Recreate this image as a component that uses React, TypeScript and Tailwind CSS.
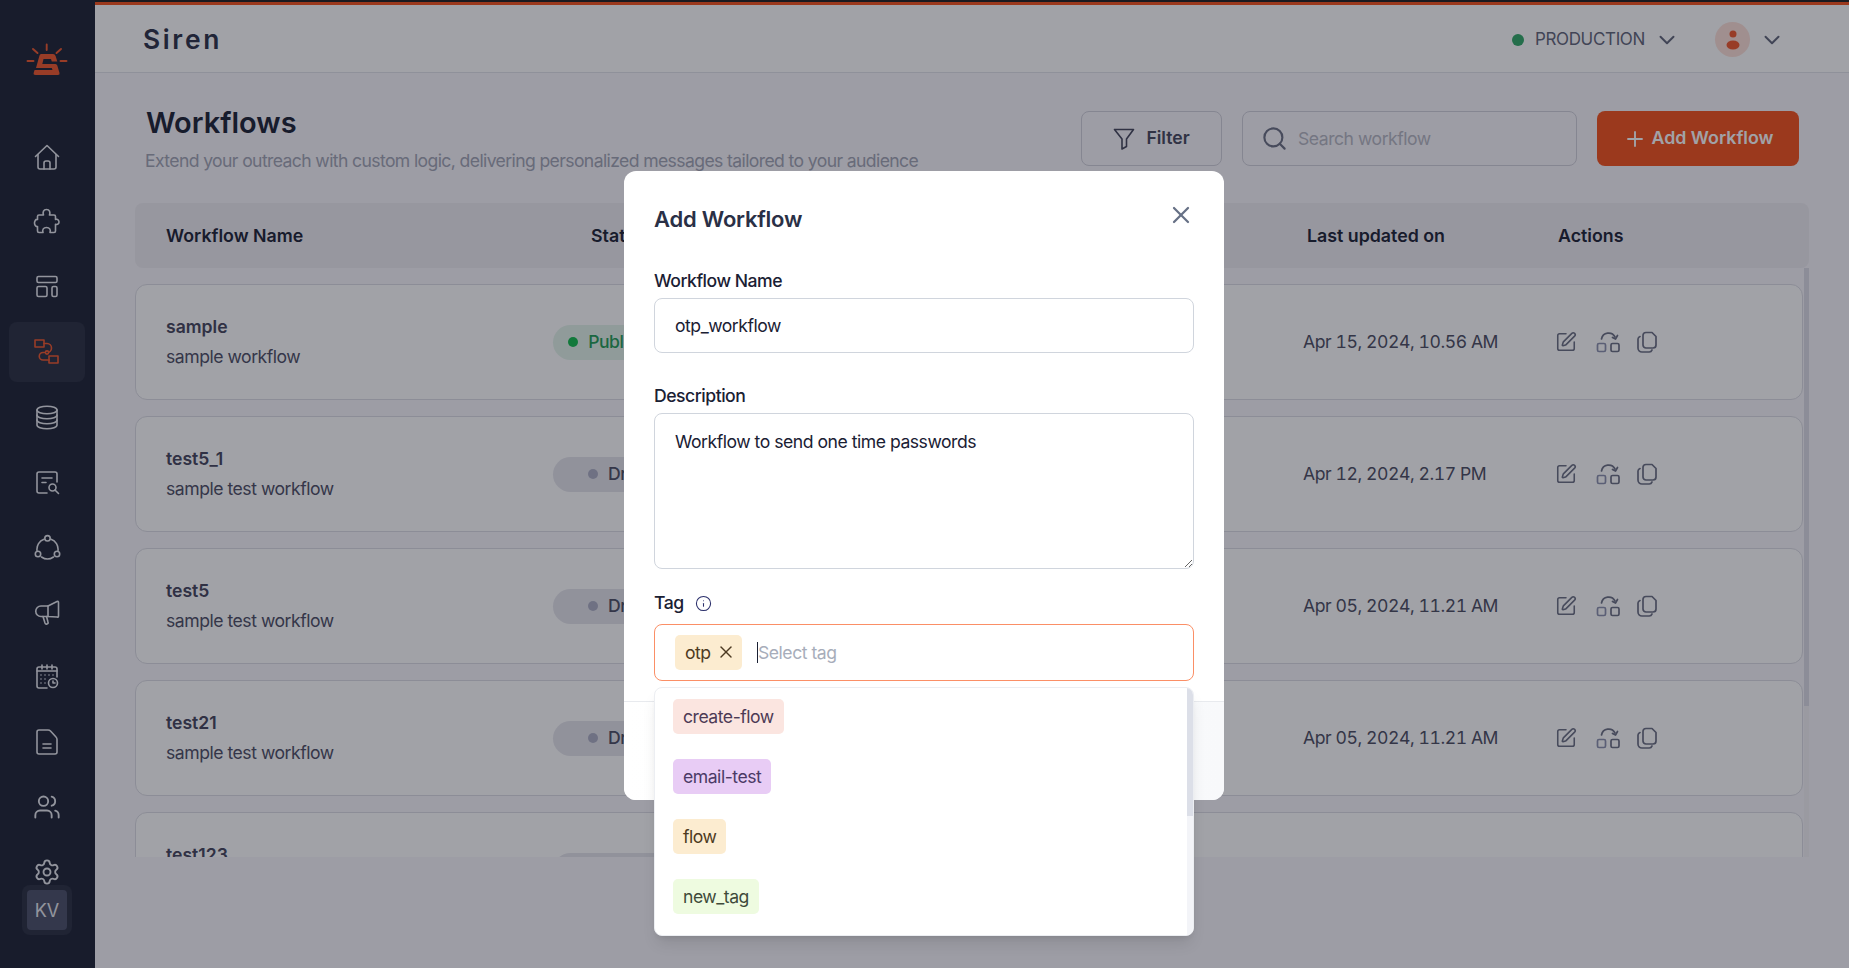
import React from 'react';
import { ChevronDown, Info, Plus, Search, Settings, SquarePen, Users, X } from 'lucide-react';

const Ico = ({ children, className = '' }: { children: React.ReactNode; className?: string }) => (
  <svg width="28" height="28" viewBox="0 0 28 28" fill="none" stroke="currentColor" strokeWidth="1.6" strokeLinecap="round" strokeLinejoin="round" className={className}>
    {children}
  </svg>
);

const Logo = () => (
  <svg width="54" height="50" viewBox="0 0 54 50" fill="none">
    <g stroke="#f0562a" strokeWidth="1.9" strokeLinecap="round">
      <path d="M26.7 7.5V13M13 12l4.5 4M41 12l-4.500 4M7.500 24H13.500M40.500 24H46.500" />
    </g>
    <path
      d="M21 17H33Q35 17 35.600 19L37.300 24.500H31.800L31 22H23.500L22.300 27H35.500Q36.800 27 37.300 28.500L39.500 36Q40 38 38 38H15.500Q13 38 13.800 35.500L14.600 33H32.500L31.800 31H16L19.500 18.500Q20 17 21 17Z"
      fill="#f0562a"
    />
  </svg>
);

const HomeIcon = () => (
  <Ico>
    <path d="M2.500 13.500L14 2.500l11.500 11" />
    <path d="M5 11.500V24a2 2 0 0 0 2 2h14a2 2 0 0 0 2-2V11.500" />
    <path d="M11 26v-6a2 2 0 0 1 2-2h2a2 2 0 0 1 2 2v6" />
  </Ico>
);

const PuzzleIcon = () => (
  <Ico>
    <path d="M6 7H10.500C9.500 4 10.500 1.500 13.500 1.500C16.500 1.500 17.500 4 16.500 7H21A1.500 1.500 0 0 1 22.500 8.500V11.500C25 10.500 26 13 26 14C26 15.500 25 17 22.500 16.300V23A1.500 1.500 0 0 1 21 24.500H17C18 21.500 16.500 19.500 13.500 19.500C10.500 19.500 9 21.500 10 24.500H6A1.500 1.500 0 0 1 4.500 23V18.500C2.500 19 1.500 16.500 1.500 15C1.500 13.500 2.500 11 4.500 11.500V8.500A1.500 1.500 0 0 1 6 7Z" />
  </Ico>
);

const LayoutIcon = () => (
  <Ico>
    <rect x="4" y="3.500" width="20" height="6" rx="1.500" />
    <rect x="4" y="13.500" width="10" height="10" rx="1.500" />
    <rect x="19" y="13.500" width="5" height="10" rx="1.500" />
  </Ico>
);

const FlowIcon = () => (
  <Ico>
    <rect x="2" y="2" width="9" height="7" />
    <rect x="16" y="18" width="9" height="7" />
    <path d="M11 5.500h3a4.500 4.500 0 0 1 0 9h-4a3.700 3.700 0 0 0 0 7.500h6" />
    <circle cx="14" cy="14.500" r="1.600" fill="#282d40" />
  </Ico>
);

const DatabaseIcon = () => (
  <Ico>
    <ellipse cx="14" cy="7" rx="10" ry="3.800" />
    <path d="M4 7V22c0 2.100 4.500 3.800 10 3.800s10-1.700 10-3.800V7" />
    <path d="M4 12c0 2.100 4.500 3.800 10 3.800s10-1.700 10-3.800" />
    <path d="M4 17c0 2.100 4.500 3.800 10 3.800s10-1.700 10-3.800" />
  </Ico>
);

const ReportIcon = () => (
  <Ico>
    <path d="M14 25H6a2 2 0 0 1-2-2V6a2 2 0 0 1 2-2h16a2 2 0 0 1 2 2v8" />
    <path d="M9 10h10M9 14.500h4" />
    <circle cx="19.500" cy="19.500" r="3.500" />
    <path d="M22 22l3.500 3.500" />
  </Ico>
);

const NetworkIcon = () => (
  <Ico>
    <circle cx="14.500" cy="4.300" r="2.700" />
    <circle cx="5" cy="20" r="2.700" />
    <circle cx="24" cy="20" r="2.700" />
    <path d="M11 5.200A10.700 10.700 0 0 0 4 16.500M18 5.200A10.700 10.700 0 0 1 25 16.500M8.500 23A10.700 10.700 0 0 0 20.500 23" />
  </Ico>
);

const MegaphoneIcon = () => (
  <Ico>
    <path d="M15 8L24 3.500Q25.500 3 25.500 4.500V18Q25.500 19.500 24 19L15 18.500Z" />
    <path d="M15 8H8a5.200 5.200 0 0 0 0 10.500H15" />
    <path d="M10 18.500L12 25Q12.500 26.500 14 26 15.500 25.500 15 24L13.500 18.500" />
  </Ico>
);

const CalendarIcon = () => (
  <Ico>
    <path d="M14 25H6a2 2 0 0 1-2-2V6a2 2 0 0 1 2-2h16a2 2 0 0 1 2 2v8" />
    <path d="M9 2v4M14 2v4M19 2v4M4 8h20" />
    <path d="M8 12h.01M12 12h.01M16 12h.01M20 12h.01M8 16h.01M12 16h.01M8 20h.01M12 20h.01" />
    <circle cx="20" cy="20" r="4.500" />
    <path d="M20 18v2h2" />
  </Ico>
);

const DocIcon = () => (
  <Ico>
    <path d="M6 2h9q1.500 0 2.500 1l5.500 6q1 1 1 2.500V24a2 2 0 0 1-2 2H6a2 2 0 0 1-2-2V4a2 2 0 0 1 2-2z" />
    <path d="M10 16h8M10 20h8" />
  </Ico>
);

const ReorderIcon = () => (
  <svg width="26" height="26" viewBox="0 0 26 26" fill="none" stroke="currentColor" strokeWidth="1.700" strokeLinecap="round" strokeLinejoin="round">
    <rect x="2.500" y="16.500" width="8" height="8" rx="1.500" stroke="#8a90ad" />
    <rect x="16" y="16.500" width="8" height="8" rx="1.500" />
    <path d="M6.500 12A7.200 7.200 0 0 1 20 10" />
    <path d="M22.500 8.500L20.500 12 17.500 10.500" />
  </svg>
);

const CopyIcon = () => (
  <svg width="22" height="22" viewBox="0 0 22 22" fill="none" stroke="currentColor" strokeWidth="1.700" strokeLinecap="round" strokeLinejoin="round">
    <path d="M10 1.500h6l4 4v8.500a3 3 0 0 1-3 3h-7a3 3 0 0 1-3-3V4.500a3 3 0 0 1 3-3z" />
    <path d="M4 5.500A3 3 0 0 0 2 8V17a4 4 0 0 0 4 4h7a3 3 0 0 0 3-2" />
  </svg>
);

const FunnelIcon = () => (
  <svg width="22" height="24" viewBox="0 0 22 24" fill="none" stroke="currentColor" strokeWidth="1.600" strokeLinejoin="round">
    <path d="M1.500 2.500H20.500L13.500 12V19.500L9 22V12Z" />
  </svg>
);

const rows = [
  { name: 'sample', desc: 'sample workflow', status: 'Published', date: 'Apr 15, 2024, 10.56 AM' },
  { name: 'test5_1', desc: 'sample test workflow', status: 'Draft', date: 'Apr 12, 2024, 2.17 PM' },
  { name: 'test5', desc: 'sample test workflow', status: 'Draft', date: 'Apr 05, 2024, 11.21 AM' },
  { name: 'test21', desc: 'sample test workflow', status: 'Draft', date: 'Apr 05, 2024, 11.21 AM' },
  { name: 'test123', desc: 'sample test workflow', status: 'Draft', date: 'Apr 05, 2024, 11.21 AM' },
];

const tags = [
  { label: 'create-flow', cls: 'bg-[#fbe5e0] text-[#4d3a55]' },
  { label: 'email-test', cls: 'bg-[#e8ccf5] text-[#4b3a66]' },
  { label: 'flow', cls: 'bg-[#fcecd0] text-[#4d3a22]' },
  { label: 'new_tag', cls: 'bg-[#eefbe0] text-[#3f4a3a]' },
];

function Sidebar() {
  const cell = 'flex h-[65px] w-full items-center justify-center';
  return (
    <aside className="flex h-full w-[95px] shrink-0 flex-col items-center bg-[#1c2133] pt-[37px] pr-px text-[#e6e8ee]">
      <Logo />
      <div className="mt-[37px] flex w-full flex-col items-center">
        <div className={cell}><HomeIcon /></div>
        <div className={cell}><PuzzleIcon /></div>
        <div className={cell}><LayoutIcon /></div>
        <div className={cell}>
          <div className="flex h-[60px] w-[76px] items-center justify-center rounded-lg bg-[#282d40] text-[#f0562a]"><FlowIcon /></div>
        </div>
        <div className={cell}><DatabaseIcon /></div>
        <div className={cell}><ReportIcon /></div>
        <div className={cell}><span className="mt-[3px]"><NetworkIcon /></span></div>
        <div className={cell}><MegaphoneIcon /></div>
        <div className={cell}><CalendarIcon /></div>
        <div className={cell}><DocIcon /></div>
        <div className={cell}><Users size={28} strokeWidth={1.6} /></div>
        <div className="flex h-[61px] w-full items-center justify-center pt-[4px]"><Settings size={28} strokeWidth={1.6} /></div>
      </div>
      <div className="mt-[-15px] flex h-[50px] w-[50px] items-center justify-center rounded-lg bg-[#282d40]">
        <div className="flex h-10 w-10 items-center justify-center rounded bg-[#4a4f68] text-[18px] tracking-normal text-[#e6e8ee]">KV</div>
      </div>
    </aside>
  );
}

function Row({ row }: { row: (typeof rows)[number] }) {
  const published = row.status === 'Published';
  return (
    <div className="flex h-[116px] w-[1668px] shrink-0 items-center rounded-xl border border-[#dcdce4] bg-white pl-[30px]">
      <div className="w-[387px]">
        <div className="text-[17.6px] leading-[24px] font-semibold tracking-normal text-[#43435a]">{row.name}</div>
        <div className="mt-[6px] text-[17.6px] leading-[24px] text-[#4b4c63]">{row.desc}</div>
      </div>
      <div className="w-[750px]">
        <div className={`inline-flex h-[35px] w-[129px] items-center justify-center rounded-full text-[17.6px] font-medium ${published ? 'bg-[#e3f4ea] text-[#1f9d55]' : 'bg-[#e5e5ec] text-[#4b4c63]'}`}>
          <span className={`mr-[10px] h-[10px] w-[10px] rounded-full ${published ? 'bg-[#11bb4c]' : 'bg-[#acaec4]'}`} />
          {row.status}
        </div>
      </div>
      <div className="w-[252px] text-[17.6px] tracking-[-0.025em] text-[#4a4b60] tabular-nums">{row.date}</div>
      <div className="flex items-center text-[#6a6e82]">
        <SquarePen size={22} strokeWidth={1.7} />
        <span className="mt-[-4px] ml-[18px]"><ReorderIcon /></span>
        <span className="ml-[15px]"><CopyIcon /></span>
      </div>
    </div>
  );
}

function Modal() {
  return (
    <div className="absolute top-[171px] left-[624px] flex h-[629px] w-[600px] flex-col rounded-xl bg-white text-[#1a2033]">
      <div className="px-[30px] pt-[32px]">
        <div className="flex h-8 items-center justify-between">
          <h2 className="text-[22px] font-semibold tracking-[-0.01em] text-[#2a3046]">Add Workflow</h2>
          <X size={28} strokeWidth={1.9} className="mt-[-9px] mr-[-1px] text-[#667085]" />
        </div>
        <label className="mt-[34px] block h-6 text-[17.6px] leading-6 font-medium">Workflow Name</label>
        <input
          readOnly
          value="otp_workflow"
          className="mt-[5px] h-[55px] w-full rounded-lg border border-[#d0d5dd] px-5 text-[17.6px] text-[#1a2033] outline-none"
        />
        <label className="mt-[31px] block h-6 text-[17.6px] leading-6 font-medium">Description</label>
        <textarea
          readOnly
          value="Workflow to send one time passwords"
          className="mt-[5px] block h-[156px] w-full rounded-lg border border-[#d0d5dd] px-5 py-[16px] text-[17.6px] leading-6 text-[#1a2033] outline-none"
        />
        <div className="mt-[22px] flex h-6 items-center gap-[11px] pt-px text-[17.6px] font-medium">
          Tag
          <Info size={17} strokeWidth={1.5} className="text-[#2b2f6b]" />
        </div>
        <div className="relative mt-[9px]">
          <div className="flex h-[57px] items-center rounded-lg border border-[#fb8f66] pl-5">
            <div className="flex h-[35px] w-[67px] items-center rounded-[5px] bg-[#fcecd0] pt-px pl-[10px] text-[17.6px] text-[#4d3a22]">
              otp
              <X size={20} strokeWidth={1.7} className="mt-[-2px] ml-[5px]" />
            </div>
            <span className="ml-[15px] h-[21px] w-px bg-[#1a2033]" />
            <span className="pt-px text-[17.6px] text-[#a7adba]">Select tag</span>
          </div>
          <div className="absolute top-[63px] left-0 z-10 flex h-[249px] w-full overflow-hidden rounded-lg border border-[#eceef2] bg-white shadow-lg">
            <div className="flex flex-1 flex-col items-start gap-[25px] pt-[11px] pl-[18px]">
              {tags.map(t => (
                <div key={t.label} className={`flex h-[35px] items-center rounded-[5px] px-[10px] pt-px text-[17.6px] ${t.cls}`}>{t.label}</div>
              ))}
            </div>
            <div className="w-[6px] bg-[#f3f4f8]">
              <div className="h-[128px] bg-[#dcdfe8]" />
            </div>
          </div>
        </div>
      </div>
      <div className="mt-auto h-[99px] rounded-b-xl border-t border-[#e8eaee] bg-gradient-to-r from-white to-[#f8f9fb]" />
    </div>
  );
}

export default function App() {
  return (
    <div className="relative flex h-[968px] w-[1849px] overflow-hidden bg-[#f9f7fc] font-[Inter,sans-serif] tracking-[-0.03em]">
      <Sidebar />
      <main className="flex min-w-0 flex-1 flex-col">
        <div className="h-[2px] bg-[#1f1f1f]" />
        <div className="h-[3px] bg-[#f5501a]" />
        <header className="flex h-[68px] items-center border-b border-[#e2e3ea] bg-white pt-[2px] pr-[64px] pl-[48px]">
          <div className="text-[26.4px] font-semibold tracking-[0.1em] text-[#2a3046]">Siren</div>
          <div className="ml-auto flex items-center text-[#5f6478]">
            <span className="h-3 w-3 rounded-full bg-[#2fa866]" />
            <span className="ml-[11px] text-[17px] tracking-[-0.02em]">PRODUCTION</span>
            <ChevronDown size={26} strokeWidth={1.8} className="ml-[9px]" />
            <span className="ml-[35px] flex h-[35px] w-[35px] items-center justify-center rounded-full bg-[#fde0d8]">
              <svg width="16" height="22" viewBox="0 0 16 22" fill="#f0562a">
                <circle cx="8" cy="5" r="3.500" />
                <ellipse cx="8" cy="16" rx="6.500" ry="4.500" />
              </svg>
            </span>
            <ChevronDown size={26} strokeWidth={1.8} className="ml-[9px]" />
          </div>
        </header>
        <div className="flex h-[93px] items-start px-[50px] pt-[38px]">
          <div className="flex-1 pl-px">
            <h1 className="mt-[-5px] text-[29px] leading-[34px] font-semibold tracking-normal text-[#1a2033]">Workflows</h1>
            <p className="mt-[9px] ml-[-1px] text-[17.6px] leading-6 tracking-[-0.035em] text-[#a0a3b3]">Extend your outreach with custom logic, delivering personalized messages tailored to your audience</p>
          </div>
          <button className="flex h-[55px] w-[141px] items-center justify-center gap-[11px] rounded-lg border border-[#d0d0da] text-[17.6px] font-semibold tracking-normal text-[#43455a]">
            <FunnelIcon />
            Filter
          </button>
          <div className="ml-5 flex h-[55px] w-[335px] items-center rounded-lg border border-[#d0d0da] pl-[18px] text-[#6a6e82]">
            <Search size={27} strokeWidth={1.9} />
            <span className="ml-[10px] pt-px text-[17.6px] text-[#b5b6c2]">Search workflow</span>
          </div>
          <button className="ml-5 flex h-[55px] w-[202px] items-center justify-center gap-[5px] rounded-lg bg-[#f5501a] text-[17.8px] font-semibold tracking-normal text-white">
            <Plus size={24} strokeWidth={1.9} />
            Add Workflow
          </button>
        </div>
        <section className="mx-[40px] mt-[37px]">
          <div className="flex h-[65px] items-center rounded-lg bg-[#eeedf2] pt-px pl-[31px] text-[17.8px] font-semibold tracking-normal text-[#1a2033]">
            <div className="w-[425px]">Workflow Name</div>
            <div className="w-[716px]">Status</div>
            <div className="w-[251px]">Last updated on</div>
            <div>Actions</div>
          </div>
          <div className="flex h-[589px] overflow-hidden">
            <div className="flex flex-1 flex-col gap-4 pt-[16px]">
              {rows.map(r => <Row key={r.name} row={r} />)}
            </div>
            <div className="w-[5px] bg-[#f3f2f6]">
              <div className="h-[438px] bg-[#dcdce6]" />
            </div>
          </div>
        </section>
      </main>
      <div className="absolute inset-0 bg-[#141622]/40" />
      <Modal />
    </div>
  );
}
